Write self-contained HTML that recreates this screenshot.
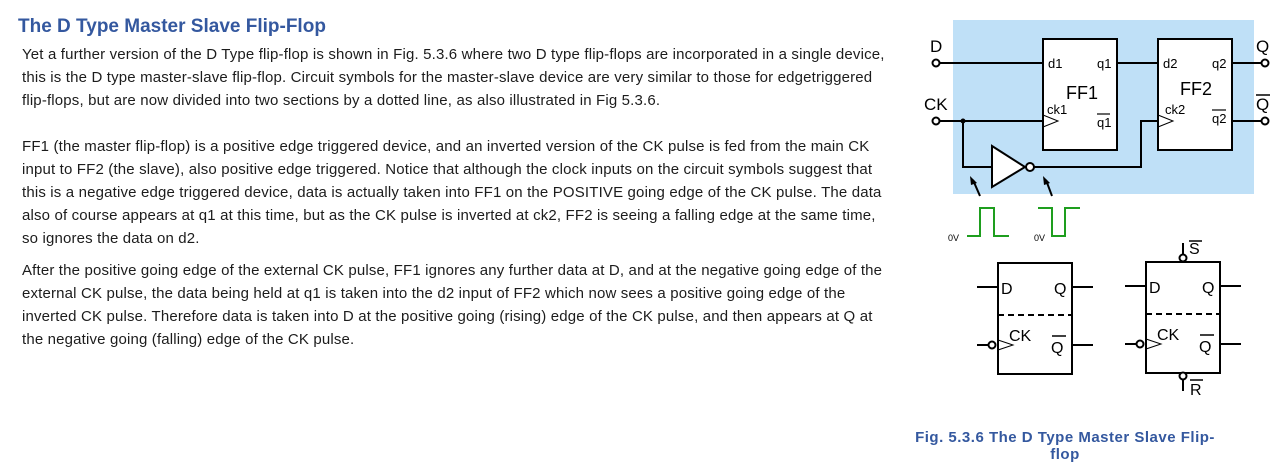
<!DOCTYPE html>
<html><head><meta charset="utf-8"><style>
body{margin:0;width:1280px;height:470px;background:#fff;position:relative;overflow:hidden;font-family:"Liberation Sans",Arial,sans-serif}
h1{position:absolute;left:18px;top:16px;margin:0;font-size:19px;font-weight:bold;color:#34589f;white-space:nowrap}
.p{position:absolute;left:22px;font-size:15px;line-height:23px;color:#1c1c1c;white-space:nowrap;letter-spacing:0.16px}
.cap{position:absolute;left:900px;width:330px;top:429px;text-align:center;font-size:15px;font-weight:bold;color:#34589f;line-height:17px;letter-spacing:0.5px}
</style></head><body>
<h1>The D Type Master Slave Flip-Flop</h1>
<div class="p" style="top:43px">Yet a further version of the D Type flip-flop is shown in Fig. 5.3.6 where two D type flip-flops are incorporated in a single device,<br>this is the D type master-slave flip-flop. Circuit symbols for the master-slave device are very similar to those for edgetriggered<br>flip-flops, but are now divided into two sections by a dotted line, as also illustrated in Fig 5.3.6.</div>
<div class="p" style="top:135px">FF1 (the master flip-flop) is a positive edge triggered device, and an inverted version of the CK pulse is fed from the main CK<br>input to FF2 (the slave), also positive edge triggered. Notice that although the clock inputs on the circuit symbols suggest that<br>this is a negative edge triggered device, data is actually taken into FF1 on the POSITIVE going edge of the CK pulse. The data<br>also of course appears at q1 at this time, but as the CK pulse is inverted at ck2, FF2 is seeing a falling edge at the same time,<br>so ignores the data on d2.</div>
<div class="p" style="top:259px">After the positive going edge of the external CK pulse, FF1 ignores any further data at D, and at the negative going edge of the<br>external CK pulse, the data being held at q1 is taken into the d2 input of FF2 which now sees a positive going edge of the<br>inverted CK pulse. Therefore data is taken into D at the positive going (rising) edge of the CK pulse, and then appears at Q at<br>the negative going (falling) edge of the CK pulse.</div>
<svg style="position:absolute;left:0;top:0" width="1280" height="470" font-family="Liberation Sans,Arial,sans-serif">
<rect x="953" y="20" width="301" height="174" fill="#bfe0f7"/>
<g stroke="#000" stroke-width="2" fill="none">
<rect x="1043" y="39" width="74" height="111" fill="#fff"/>
<rect x="1158" y="39" width="74" height="111" fill="#fff"/>
<line x1="939" y1="63" x2="1043" y2="63"/>
<line x1="1117" y1="63" x2="1158" y2="63"/>
<line x1="1232" y1="63" x2="1261" y2="63"/>
<line x1="1232" y1="121" x2="1261" y2="121"/>
<line x1="939" y1="121" x2="1043" y2="121"/>
<polyline points="963,121 963,167 992,167"/>
<polyline points="1034,167 1141,167 1141,121 1158,121"/>
<polygon points="992,146 992,187 1025,167" fill="#fff"/>
<circle cx="1030" cy="167" r="4" fill="#fff"/>
<circle cx="936" cy="63" r="3.5" fill="#fff"/><circle cx="936" cy="121" r="3.5" fill="#fff"/>
<circle cx="1265" cy="63" r="3.5" fill="#fff"/><circle cx="1265" cy="121" r="3.5" fill="#fff"/>
</g>
<circle cx="963" cy="121" r="2.5"/>
<g stroke="#000" stroke-width="1" fill="none"><polyline points="1043,115 1058,121 1043,127"/><polyline points="1158,115 1173,121 1158,127"/></g>
<g stroke="#000" stroke-width="2"><line x1="980" y1="196" x2="973" y2="180"/><line x1="1052" y1="196" x2="1046" y2="180"/></g>
<polygon points="970,176 977,183 971,185" /><polygon points="1043,176 1050,183 1044,185"/>
<g stroke="#1e9e1e" stroke-width="2" fill="none"><polyline points="967,236 980,236 980,208 994,208 994,236 1009,236"/><polyline points="1038,208 1052,208 1052,236 1065,236 1065,208 1080,208"/></g>
<g font-size="9" fill="#000"><text x="948" y="241">0V</text><text x="1034" y="241">0V</text></g>
<g font-size="17" fill="#000"><text x="930" y="52">D</text><text x="924" y="110">CK</text><text x="1256" y="52">Q</text><text x="1256" y="110">Q</text></g>
<line x1="1256" y1="95" x2="1270" y2="95" stroke="#000" stroke-width="1.5"/>
<g font-size="13" fill="#000"><text x="1048" y="68">d1</text><text x="1097" y="68">q1</text><text x="1047" y="114">ck1</text><text x="1097" y="127">q1</text>
<text x="1163" y="68">d2</text><text x="1212" y="68">q2</text><text x="1165" y="114">ck2</text><text x="1212" y="123">q2</text></g>
<g stroke="#000" stroke-width="1.2"><line x1="1097" y1="114" x2="1110" y2="114"/><line x1="1212" y1="110" x2="1226" y2="110"/></g>
<g font-size="18" fill="#000"><text x="1066" y="99">FF1</text><text x="1180" y="95">FF2</text></g>
<g stroke="#000" stroke-width="2" fill="none">
<rect x="998" y="263" width="74" height="111"/>
<rect x="1146" y="262" width="74" height="111"/>
<line x1="998" y1="315" x2="1072" y2="315" stroke-dasharray="6,4"/>
<line x1="1146" y1="314" x2="1220" y2="314" stroke-dasharray="6,4"/>
<line x1="977" y1="287" x2="998" y2="287"/><line x1="1072" y1="287" x2="1093" y2="287"/>
<line x1="977" y1="345" x2="988" y2="345"/><line x1="1072" y1="345" x2="1093" y2="345"/>
<line x1="1125" y1="286" x2="1146" y2="286"/><line x1="1220" y1="286" x2="1241" y2="286"/>
<line x1="1125" y1="344" x2="1136" y2="344"/><line x1="1220" y1="344" x2="1241" y2="344"/>
<line x1="1183" y1="243" x2="1183" y2="254"/><line x1="1183" y1="380" x2="1183" y2="391"/>
<circle cx="992" cy="345" r="3.5" fill="#fff"/><circle cx="1140" cy="344" r="3.5" fill="#fff"/>
<circle cx="1183" cy="258" r="3.5" fill="#fff"/><circle cx="1183" cy="376" r="3.5" fill="#fff"/>
</g>
<g stroke="#000" stroke-width="1" fill="none"><polyline points="998,340 1013,345 998,350"/><polyline points="1146,339 1161,344 1146,349"/></g>
<g font-size="16" fill="#000"><text x="1001" y="294">D</text><text x="1054" y="294">Q</text><text x="1009" y="341">CK</text><text x="1051" y="353">Q</text>
<text x="1149" y="293">D</text><text x="1202" y="293">Q</text><text x="1157" y="340">CK</text><text x="1199" y="352">Q</text>
<text x="1189" y="254">S</text><text x="1190" y="395">R</text></g>
<g stroke="#000" stroke-width="1.5"><line x1="1052" y1="336" x2="1066" y2="336"/><line x1="1200" y1="335" x2="1214" y2="335"/><line x1="1189" y1="241" x2="1202" y2="241"/><line x1="1190" y1="380" x2="1203" y2="380"/></g>
</svg>
<div class="cap">Fig. 5.3.6 The D Type Master Slave Flip-<br>flop</div>
</body></html>
